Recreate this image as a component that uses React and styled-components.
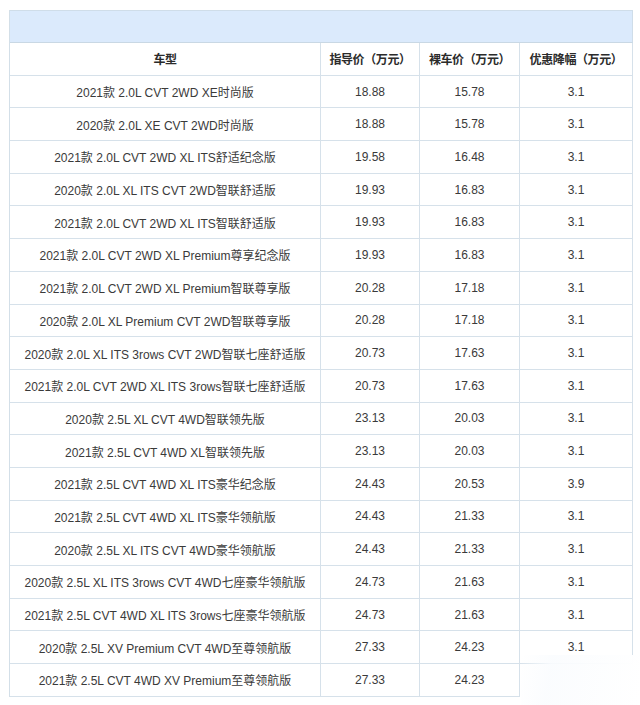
import React from "react";
import styled, { createGlobalStyle } from "styled-components";

const Global = createGlobalStyle`
  html, body { margin: 0; padding: 0; background: #ffffff; }
  body { font-family: "Liberation Sans", Arial, "Noto Sans CJK SC", sans-serif; }
`;

const Page = styled.div`
  padding: 10px 0 0 9px;
  width: 640px;
  height: 705px;
  box-sizing: border-box;
  position: relative;
  overflow: hidden;
`;

const Table = styled.div`
  display: grid;
  grid-template-columns: 311px 99px 100px 113px;
  border-left: 1px solid #d3dfe8;
  width: 623px;
`;

const Caption = styled.div`
  grid-column: 1 / -1;
  height: 33px;
  box-sizing: border-box;
  background: #dbeafc;
  border-top: 1px solid #cfdde9;
  border-right: 1px solid #cfdde9;
  border-bottom: 1px solid #c9d8e4;
`;

const Cell = styled.div`
  height: 32.7px;
  box-sizing: border-box;
  display: flex;
  align-items: center;
  justify-content: center;
  border-right: 1px solid #d6e1ea;
  border-bottom: 1px solid #d6e1ea;
  font-size: 12px;
  color: ${(p) => (p.$head ? "#2b2b2b" : "#3a3a3a")};
  font-weight: ${(p) => (p.$head ? 700 : 400)};
  white-space: nowrap;
  letter-spacing: ${(p) => (p.$head ? "-0.4px" : "0")};
`;

const Fade = styled.div`
  position: absolute;
  left: 521px;
  top: 655px;
  width: 119px;
  height: 50px;
  background: linear-gradient(100deg, rgba(255,255,255,0) 0%, rgba(250,252,254,0.9) 25%, #ffffff 100%);
`;

const rows = [
  ["2021款 2.0L CVT 2WD XE时尚版", "18.88", "15.78", "3.1"],
  ["2020款 2.0L XE CVT 2WD时尚版", "18.88", "15.78", "3.1"],
  ["2021款 2.0L CVT 2WD XL ITS舒适纪念版", "19.58", "16.48", "3.1"],
  ["2020款 2.0L XL ITS CVT 2WD智联舒适版", "19.93", "16.83", "3.1"],
  ["2021款 2.0L CVT 2WD XL ITS智联舒适版", "19.93", "16.83", "3.1"],
  ["2021款 2.0L CVT 2WD XL Premium尊享纪念版", "19.93", "16.83", "3.1"],
  ["2021款 2.0L CVT 2WD XL Premium智联尊享版", "20.28", "17.18", "3.1"],
  ["2020款 2.0L XL Premium CVT 2WD智联尊享版", "20.28", "17.18", "3.1"],
  ["2020款 2.0L XL ITS 3rows CVT 2WD智联七座舒适版", "20.73", "17.63", "3.1"],
  ["2021款 2.0L CVT 2WD XL ITS 3rows智联七座舒适版", "20.73", "17.63", "3.1"],
  ["2020款 2.5L XL CVT 4WD智联领先版", "23.13", "20.03", "3.1"],
  ["2021款 2.5L CVT 4WD XL智联领先版", "23.13", "20.03", "3.1"],
  ["2021款 2.5L CVT 4WD XL ITS豪华纪念版", "24.43", "20.53", "3.9"],
  ["2021款 2.5L CVT 4WD XL ITS豪华领航版", "24.43", "21.33", "3.1"],
  ["2020款 2.5L XL ITS CVT 4WD豪华领航版", "24.43", "21.33", "3.1"],
  ["2020款 2.5L XL ITS 3rows CVT 4WD七座豪华领航版", "24.73", "21.63", "3.1"],
  ["2021款 2.5L CVT 4WD XL ITS 3rows七座豪华领航版", "24.73", "21.63", "3.1"],
  ["2020款 2.5L XV Premium CVT 4WD至尊领航版", "27.33", "24.23", "3.1"],
  ["2021款 2.5L CVT 4WD XV Premium至尊领航版", "27.33", "24.23", null],
];

const heads = ["车型", "指导价（万元）", "裸车价（万元）", "优惠降幅（万元）"];

export default function App() {
  return (
    <Page>
      <Global />
      <Table>
        <Caption />
        {heads.map((h) => (
          <Cell key={h} $head>{h}</Cell>
        ))}
        {rows.map((r, i) =>
          r.map((c, j) =>
            c === null ? null : <Cell key={i + "-" + j}>{c}</Cell>
          )
        )}
      </Table>
      <Fade />
    </Page>
  );
}
